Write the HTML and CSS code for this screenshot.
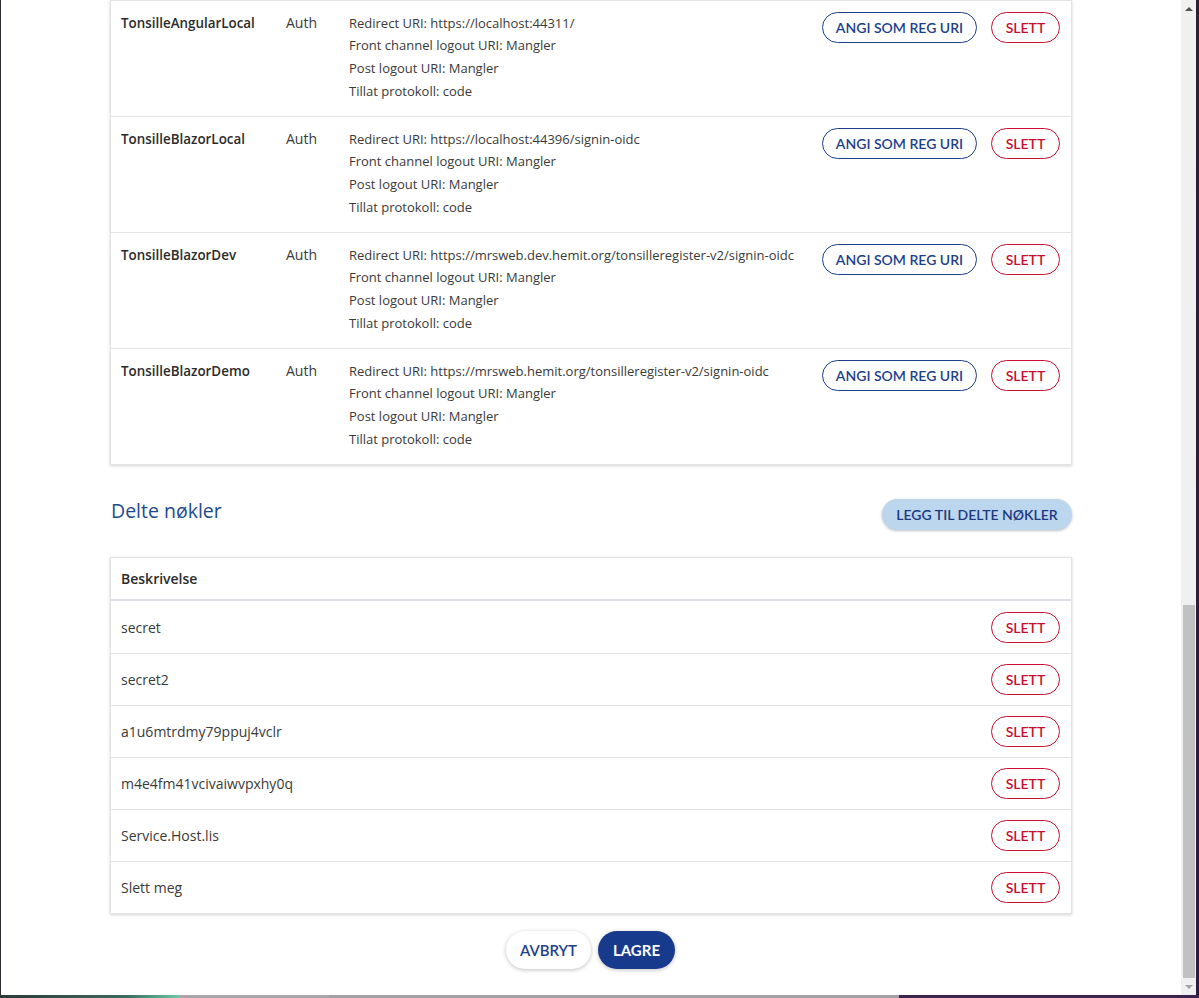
FILE: index.html
```html
<!DOCTYPE html>
<html lang="no">
<head>
<meta charset="utf-8">
<title>Klient</title>
<link rel="stylesheet" href="styles.css">
</head>
<body>
<div class="screen">
  <div class="frame-left"></div>
  <main class="viewport">
    <div class="container">
      <section class="card uri-card">
        <div class="uri-row">
          <div class="name">TonsilleAngularLocal</div>
          <div class="type">Auth</div>
          <div class="details">
            <div>Redirect URI: https://localhost:44311/</div>
            <div>Front channel logout URI: Mangler</div>
            <div>Post logout URI: Mangler</div>
            <div>Tillat protokoll: code</div>
          </div>
          <div class="actions">
            <button class="btn btn-outline-blue">ANGI SOM REG URI</button>
            <button class="btn btn-outline-red">SLETT</button>
          </div>
        </div>
        <div class="uri-row">
          <div class="name">TonsilleBlazorLocal</div>
          <div class="type">Auth</div>
          <div class="details">
            <div>Redirect URI: https://localhost:44396/signin-oidc</div>
            <div>Front channel logout URI: Mangler</div>
            <div>Post logout URI: Mangler</div>
            <div>Tillat protokoll: code</div>
          </div>
          <div class="actions">
            <button class="btn btn-outline-blue">ANGI SOM REG URI</button>
            <button class="btn btn-outline-red">SLETT</button>
          </div>
        </div>
        <div class="uri-row">
          <div class="name">TonsilleBlazorDev</div>
          <div class="type">Auth</div>
          <div class="details">
            <div>Redirect URI: https://mrsweb.dev.hemit.org/tonsilleregister-v2/signin-oidc</div>
            <div>Front channel logout URI: Mangler</div>
            <div>Post logout URI: Mangler</div>
            <div>Tillat protokoll: code</div>
          </div>
          <div class="actions">
            <button class="btn btn-outline-blue">ANGI SOM REG URI</button>
            <button class="btn btn-outline-red">SLETT</button>
          </div>
        </div>
        <div class="uri-row">
          <div class="name">TonsilleBlazorDemo</div>
          <div class="type">Auth</div>
          <div class="details">
            <div>Redirect URI: https://mrsweb.hemit.org/tonsilleregister-v2/signin-oidc</div>
            <div>Front channel logout URI: Mangler</div>
            <div>Post logout URI: Mangler</div>
            <div>Tillat protokoll: code</div>
          </div>
          <div class="actions">
            <button class="btn btn-outline-blue">ANGI SOM REG URI</button>
            <button class="btn btn-outline-red">SLETT</button>
          </div>
        </div>
      </section>

      <div class="section-head">
        <h2 class="section-title">Delte nøkler</h2>
        <button class="btn btn-light-blue">LEGG TIL DELTE NØKLER</button>
      </div>

      <section class="card keys-card">
        <div class="keys-header">Beskrivelse</div>
        <div class="key-row"><span>secret</span><button class="btn btn-outline-red">SLETT</button></div>
        <div class="key-row"><span>secret2</span><button class="btn btn-outline-red">SLETT</button></div>
        <div class="key-row"><span>a1u6mtrdmy79ppuj4vclr</span><button class="btn btn-outline-red">SLETT</button></div>
        <div class="key-row"><span>m4e4fm41vcivaiwvpxhy0q</span><button class="btn btn-outline-red">SLETT</button></div>
        <div class="key-row"><span>Service.Host.lis</span><button class="btn btn-outline-red">SLETT</button></div>
        <div class="key-row"><span>Slett meg</span><button class="btn btn-outline-red">SLETT</button></div>
      </section>

      <div class="footer-actions">
        <button class="btn btn-white">AVBRYT</button>
        <button class="btn btn-primary">LAGRE</button>
      </div>
    </div>
  </main>
  <div class="scrollbar">
    <div class="arrow arrow-up"></div>
    <div class="track">
      <div class="thumb"></div>
    </div>
    <div class="arrow arrow-down"></div>
  </div>
  <div class="frame-right"></div>
</div>
<div class="desktop-strip">
  <div class="strip-a"></div>
  <div class="strip-b"></div>
  <div class="strip-c"></div>
  <div class="strip-d"></div>
</div>
</body>
</html>
```
FILE: styles.css
```css
* { box-sizing: border-box; }
html, body {
  margin: 0;
  padding: 0;
  height: 998px;
  overflow: hidden;
  background: #fff;
}
body {
  font-family: "Open Sans", "Liberation Sans", sans-serif;
  color: #333;
}
.screen {
  display: flex;
  height: 995px;
}
.frame-left {
  width: 1px;
  background: #2b2d33;
}
.viewport {
  flex: 1;
  overflow: hidden;
  background: #fff;
}
.container {
  width: 962px;
  margin: 0 0 0 109px;
}
.card {
  background: #fff;
  border: 1px solid #e1e3e6;
  box-shadow: 0 1px 3px rgba(0,0,0,0.18);
}
.uri-card {
  border-top: none;
}
.uri-row {
  display: grid;
  grid-template-columns: 165px 63px 1fr auto;
  align-items: start;
  padding: 0 11px 0 10px;
  height: 116px;
  border-top: 1px solid #e1e3e6;
}
.name {
  font-size: 13.4px;
  font-weight: 600;
  line-height: 22.7px;
  padding-top: 10.5px;
  color: #2b2b2b;
}
.type {
  font-size: 14px;
  line-height: 22.7px;
  padding-top: 10.5px;
  color: #3a3a3a;
}
.details {
  font-size: 13px;
  line-height: 22.7px;
  padding-top: 10.5px;
  color: #3a3a3a;
}
.actions {
  display: flex;
  gap: 14px;
  padding-top: 10.5px;
}
.btn {
  font-family: "Lato", "Liberation Sans", sans-serif;
  font-size: 14px;
  font-weight: 600;
  border-radius: 999px;
  cursor: pointer;
  background: #fff;
  white-space: nowrap;
}
.btn-outline-blue {
  height: 31px;
  width: 155px;
  border: 1px solid #1d3f8c;
  color: #1d3f8c;
  padding: 0;
}
.btn-outline-red {
  height: 31px;
  width: 69px;
  border: 1px solid #c8102e;
  color: #c8102e;
  padding: 0;
}
.section-head {
  display: flex;
  justify-content: space-between;
  align-items: flex-start;
  margin-top: 34px;
  padding-left: 1px;
}
.section-title {
  margin: 0;
  font-size: 19.5px;
  line-height: 24px;
  font-weight: 400;
  color: #1d4b8f;
}
.btn-light-blue {
  height: 31px;
  width: 190px;
  border: none;
  background: #bcd6ee;
  color: #1d3a80;
  box-shadow: 0 1px 3px rgba(0,0,0,0.25);
  padding: 0;
}
.keys-card {
  margin-top: 27px;
}
.keys-header {
  height: 43px;
  padding: 0 10px;
  display: flex;
  align-items: center;
  font-size: 14px;
  font-weight: 600;
  color: #2b2b2b;
  border-bottom: 2px solid #dee1e5;
}
.key-row {
  height: 52px;
  display: flex;
  justify-content: space-between;
  align-items: center;
  padding: 0 11px 0 10px;
  font-size: 14px;
  color: #3a3a3a;
  border-top: 1px solid #e1e3e6;
}
.key-row:nth-child(2) { border-top: none; }
.footer-actions {
  display: flex;
  justify-content: center;
  gap: 7px;
  margin-top: 17px;
  padding-right: 1px;
}
.btn-white {
  height: 38px;
  width: 85px;
  border: none;
  color: #1d3f8c;
  font-size: 15px;
  box-shadow: 0 1px 4px rgba(0,0,0,0.25);
  padding: 0;
}
.btn-primary {
  height: 38px;
  width: 77px;
  border: none;
  background: #183a8c;
  color: #fff;
  font-size: 15px;
  font-weight: 700;
  box-shadow: 0 1px 4px rgba(0,0,0,0.25);
  padding: 0;
}
.scrollbar {
  width: 15px;
  background: #f0f0f0;
  display: flex;
  flex-direction: column;
}
.arrow {
  height: 17px;
  display: flex;
  justify-content: center;
  align-items: center;
}
.arrow-up::before {
  content: "";
  border-left: 4px solid transparent;
  border-right: 4px solid transparent;
  border-bottom: 4px solid #505050;
}
.arrow-down::before {
  content: "";
  border-left: 4px solid transparent;
  border-right: 4px solid transparent;
  border-top: 4px solid #a3a3a3;
}
.track {
  flex: 1;
  display: flex;
  flex-direction: column;
  justify-content: flex-end;
  padding: 0 1px 0 2px;
}
.thumb {
  height: 373px;
  background: #c1c1c1;
}
.frame-right {
  width: 3px;
  background: linear-gradient(#2a2233, #2e1b45);
}
.desktop-strip {
  height: 3px;
  display: flex;
}
.strip-a { width: 180px; background: linear-gradient(90deg, #2b3a3a, #3d6a5e 70%, #6fc9a8); }
.strip-b { width: 149px; background: #a9a4ac; }
.strip-c { width: 570px; background: #a5a0a8; }
.strip-d { flex: 1; background: #3a2450; }
```
